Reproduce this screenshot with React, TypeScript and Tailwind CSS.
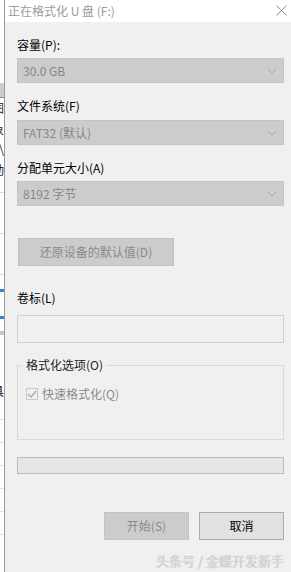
import React from 'react';

const font = { fontFamily: '"Noto Sans CJK SC", "Liberation Sans", sans-serif' };

const Chevron: React.FC = () => (
  <svg width="10" height="6" viewBox="0 0 10 6" fill="none">
    <path d="M1 1l4 4 4-4" stroke="#a8a8a8" strokeWidth="1" />
  </svg>
);

// disabled combo box
const Select: React.FC<{ value: string; className?: string }> = ({ value, className }) => (
  <div
    className={`h-[25px] bg-[#cccccc] border border-[#c4c4c4] flex items-center justify-between pl-[5px] pr-[6px] text-[12px] text-[#878787] ${className ?? ''}`}
  >
    <span>{value}</span>
    <Chevron />
  </div>
);

const Clip: React.FC<{ ch: string; className?: string }> = ({ ch, className }) => (
  <div className={`w-[4px] h-[16px] overflow-hidden flex justify-end ${className ?? ''}`}>
    <span className="shrink-0 text-[12px] leading-[16px] text-[#222]">{ch}</span>
  </div>
);

const App: React.FC = () => {
  return (
    <div className="w-[291px] h-[572px] flex overflow-hidden bg-white" style={font}>
      {/* 背后窗口露出的一条 */}
      <div className="w-[5px] shrink-0 flex flex-col bg-white border-r border-[#9a9a9a]">
        <div className="h-[83px]" />
        <div className="h-[14px] bg-[#cdcdcd]" />
        <div className="h-px bg-[#8c8c8c]" />
        <Clip ch="图" className="mt-[2px]" />
        <Clip ch="象" className="mt-[6px]" />
        <Clip ch="\" className="mt-[3px]" />
        <Clip ch="动" className="mt-[5px]" />
        <div className="h-px bg-[#dcdcdc] mt-[14px]" />
        <div className="h-px bg-[#dcdcdc] mt-[40px]" />
        <div className="h-px bg-[#dcdcdc] mt-[40px]" />
        <div className="h-[3px] bg-[#3d86c9] mt-[14px]" />
        <div className="h-[3px] bg-[#3d86c9] mt-[24px]" />
        <div className="h-[4px] bg-[#c8c8c8] mt-[12px]" />
        <Clip ch="具" className="mt-[48px]" />
        <div className="h-px bg-[#e2e2e2] mt-[20px]" />
        <div className="h-px bg-[#e2e2e2] mt-[22px]" />
        <div className="h-px bg-[#e2e2e2] mt-[22px]" />
        <div className="h-px bg-[#e2e2e2] mt-[22px]" />
        <div className="h-px bg-[#e2e2e2] mt-[22px]" />
        <div className="h-px bg-[#e2e2e2] mt-[22px]" />
      </div>

      {/* 对话框 */}
      <div className="flex-1 flex flex-col">
        <div className="h-[22px] bg-white flex items-center justify-between pl-[3px] pr-[4px]">
          <span className="text-[12px] text-[#9b9b9b] leading-[16px]">正在格式化 U 盘 (F:)</span>
          <svg width="11" height="11" viewBox="0 0 11 11" className="mt-[-2px]">
            <path d="M0.5 0.5l10 10M10.5 0.5l-10 10" stroke="#8a8a8a" strokeWidth="1" />
          </svg>
        </div>

        <div className="flex-1 bg-[#f0f0f0] flex flex-col pl-[12px] pr-[7px] text-[12px] leading-[16px] text-black">
          <div className="mt-[15px]">容量(P):</div>
          <Select value="30.0 GB" className="mt-[5px]" />

          <div className="mt-[15px]">文件系统(F)</div>
          <Select value="FAT32 (默认)" className="mt-[6px]" />

          <div className="mt-[15px]">分配单元大小(A)</div>
          <Select value="8192 字节" className="mt-[5px]" />

          <button className="mt-[32px] ml-px w-[156px] h-[28px] bg-[#cccccc] border border-[#c2c2c2] text-[12px] text-[#8a8a8a]">
            还原设备的默认值(D)
          </button>

          <div className="mt-[24px]">卷标(L)</div>
          <div className="mt-[9px] h-[28px] border border-[#d0d0d0] bg-[#f0f0f0]" />

          <fieldset className="mt-[14px] border border-[#dadada] pb-[37px]">
            <legend className="ml-[5px] px-[3px] text-[12px] leading-[16px] text-[#222]">格式化选项(O)</legend>
            <div className="mt-[13px] ml-[8px] flex items-center gap-[4px] text-[#8a8a8a]">
              <div className="w-[12px] h-[12px] border border-[#c8c8c8] bg-[#f0f0f0] flex items-center justify-center">
                <svg width="10" height="8" viewBox="0 0 10 8" fill="none">
                  <path d="M1 4l3 3 5-6" stroke="#a6a6a6" strokeWidth="1.2" />
                </svg>
              </div>
              <span>快速格式化(Q)</span>
            </div>
          </fieldset>

          <div className="mt-[17px] h-[17px] bg-[#e6e6e6] border border-[#bcbcbc]" />

          <div className="mt-[38px] flex justify-end gap-[10px]">
            <button className="w-[85px] h-[28px] bg-[#cccccc] border border-[#c4c4c4] text-[12px] text-[#8a8a8a]">
              开始(S)
            </button>
            <button className="w-[85px] h-[28px] bg-[#e1e1e1] border border-[#adadad] text-[12px] text-black">
              取消
            </button>
          </div>

          <div className="mt-[13px] text-right text-[13px] text-[#d6d6d6] [text-shadow:0_0_1px_#b5b5b5]">
            头条号 / 金蝶开发新手
          </div>
        </div>
      </div>
    </div>
  );
};

export default App;
